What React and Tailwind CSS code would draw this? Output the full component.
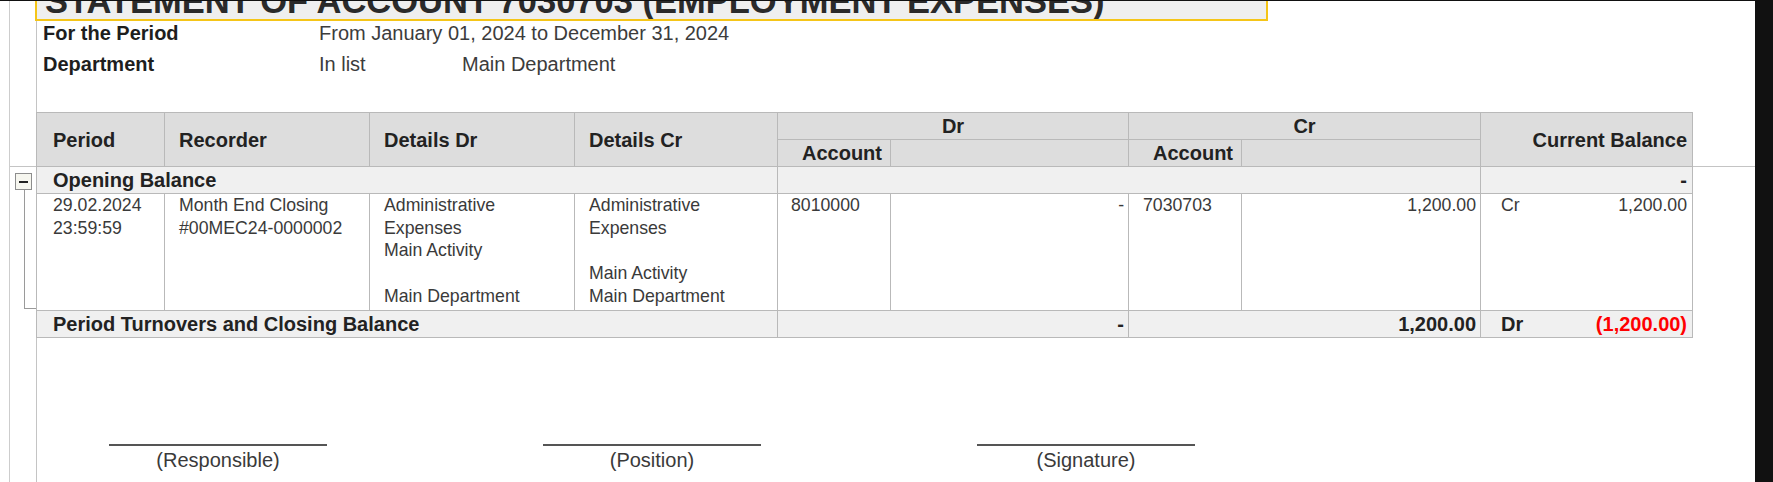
import React from "react";

const B = "border border-[#b9b9b9]";

export default function App() {
  return (
    <div className="w-[1773px] h-[482px] overflow-hidden bg-white font-['Liberation_Sans',Arial,sans-serif] text-[#333]">
      <div className="h-px bg-[#111]" />
      <div className="flex h-[481px]">
        {/* gutter with grouping tree */}
        <div className="w-[36px] flex-none">
          <div className="ml-[9px] h-full border-l border-[#cdcdcd]">
            <div className="h-[166px] border-b border-[#c4c4c4]" />
            <div className="mt-[6px] ml-[5px] w-[17px] h-[17px] border border-[#8d8d8d] bg-[#f6f6ef] flex items-center justify-center">
              <div className="w-[9px] h-[2px] bg-[#222]" />
            </div>
            <div className="ml-[14px] w-[13px] h-[119px] border-l border-b border-[#9a9a9a]" />
          </div>
        </div>

        {/* report area */}
        <div className="flex-1 min-w-0 border-l border-[#c4c4c4] flex flex-col">
          {/* title */}
          <div className="ml-[-2px] w-[1233px] h-[20px] overflow-hidden border-x-2 border-b-2 border-[#f5c518] bg-[#efefef]">
            <div className="mt-[-17px] pl-[8px] text-[34.5px] leading-[34px] font-bold text-[#2a2a2a] whitespace-nowrap">
              STATEMENT OF ACCOUNT 7030703 (EMPLOYMENT EXPENSES)
            </div>
          </div>

          {/* parameters */}
          <div className="pl-[6px] text-[20px]">
            <div className="flex h-[24px] leading-[24px]">
              <div className="w-[276px] font-bold text-[#1e1e1e]">For the Period</div>
              <div className="text-[#3c3c3c]">From January 01, 2024 to December 31, 2024</div>
            </div>
            <div className="flex h-[24px] leading-[24px] mt-[7px]">
              <div className="w-[276px] font-bold text-[#1e1e1e]">Department</div>
              <div className="w-[143px] text-[#3c3c3c]">In list</div>
              <div className="text-[#3c3c3c]">Main Department</div>
            </div>
          </div>

          {/* table */}
          <div className="flex mt-[36px]">
            <table className="table-fixed border-collapse ml-[-1px] w-[1656px] flex-none">
              <colgroup>
                <col className="w-[128px]" />
                <col className="w-[205px]" />
                <col className="w-[205px]" />
                <col className="w-[203px]" />
                <col className="w-[113px]" />
                <col className="w-[238px]" />
                <col className="w-[113px]" />
                <col className="w-[239px]" />
                <col className="w-[212px]" />
              </colgroup>
              <thead>
                <tr className="h-[27px] bg-[#dddddd] text-[20px] leading-[22px] font-bold text-[#222]">
                  <th rowSpan={2} className={`${B} text-left font-bold pl-[16px] p-0`}>Period</th>
                  <th rowSpan={2} className={`${B} text-left font-bold pl-[14px] p-0`}>Recorder</th>
                  <th rowSpan={2} className={`${B} text-left font-bold pl-[14px] p-0`}>Details Dr</th>
                  <th rowSpan={2} className={`${B} text-left font-bold pl-[14px] p-0`}>Details Cr</th>
                  <th colSpan={2} className={`${B} text-center font-bold p-0`}>Dr</th>
                  <th colSpan={2} className={`${B} text-center font-bold p-0`}>Cr</th>
                  <th rowSpan={2} className={`${B} text-right font-bold pr-[5px] p-0`}>Current Balance</th>
                </tr>
                <tr className="h-[27px] bg-[#dddddd] text-[20px] leading-[22px] font-bold text-[#222]">
                  <th className={`${B} text-right font-bold pr-[8px] p-0`}>Account</th>
                  <th className={`${B} p-0`} />
                  <th className={`${B} text-right font-bold pr-[8px] p-0`}>Account</th>
                  <th className={`${B} p-0`} />
                </tr>
              </thead>
              <tbody>
                <tr className="h-[27px] bg-[#f0f0f0] text-[20px] leading-[22px] font-bold text-[#222]">
                  <td colSpan={4} className={`${B} pl-[16px] p-0`}>Opening Balance</td>
                  <td colSpan={4} className={`${B} p-0`} />
                  <td className={`${B} text-right pr-[5px] p-0`}>-</td>
                </tr>
                <tr className="h-[117px] text-[17.7px] leading-[22.7px] text-[#3a3a3a] align-top">
                  <td className={`${B} pl-[16px] pt-0`}>
                    <div>29.02.2024</div>
                    <div>23:59:59</div>
                  </td>
                  <td className={`${B} pl-[14px] pt-0`}>
                    <div>Month End Closing</div>
                    <div>#00MEC24-0000002</div>
                  </td>
                  <td className={`${B} pl-[14px] pt-0`}>
                    <div>Administrative</div>
                    <div>Expenses</div>
                    <div>Main Activity</div>
                    <div className="h-[22.7px]" />
                    <div>Main Department</div>
                  </td>
                  <td className={`${B} pl-[14px] pt-0`}>
                    <div>Administrative</div>
                    <div>Expenses</div>
                    <div className="h-[22.7px]" />
                    <div>Main Activity</div>
                    <div>Main Department</div>
                  </td>
                  <td className={`${B} pl-[13px] pt-0`}>8010000</td>
                  <td className={`${B} text-right pr-[4px] pt-0`}>-</td>
                  <td className={`${B} pl-[14px] pt-0`}>7030703</td>
                  <td className={`${B} text-right pr-[4px] pt-0`}>1,200.00</td>
                  <td className={`${B} pt-0 pr-[5px] pl-[20px]`}>
                    <div className="flex justify-between">
                      <span>Cr</span>
                      <span>1,200.00</span>
                    </div>
                  </td>
                </tr>
                <tr className="h-[27px] bg-[#f0f0f0] text-[20px] leading-[22px] font-bold text-[#222]">
                  <td colSpan={4} className={`${B} pl-[16px] p-0`}>Period Turnovers and Closing Balance</td>
                  <td colSpan={2} className={`${B} text-right pr-[4px] p-0`}>-</td>
                  <td colSpan={2} className={`${B} text-right pr-[4px] p-0`}>1,200.00</td>
                  <td className={`${B} p-0 pl-[20px] pr-[5px]`}>
                    <div className="flex justify-between">
                      <span>Dr</span>
                      <span className="text-[#ff0000]">(1,200.00)</span>
                    </div>
                  </td>
                </tr>
              </tbody>
            </table>
            <div className="flex-1 mt-[54px] h-0 border-t border-[#c4c4c4]" />
          </div>

          {/* signatures */}
          <div className="flex ml-[72px] gap-[216px] mt-[106px] text-[20px] text-[#3a3a3a]">
            {["(Responsible)", "(Position)", "(Signature)"].map((t) => (
              <div key={t} className="w-[218px]">
                <div className="h-[2px] bg-[#555]" />
                <div className="text-center leading-[22px] mt-[3px]">{t}</div>
              </div>
            ))}
          </div>
        </div>

        {/* dark strip */}
        <div className="w-[18px] flex-none bg-[#111]" />
      </div>
    </div>
  );
}
